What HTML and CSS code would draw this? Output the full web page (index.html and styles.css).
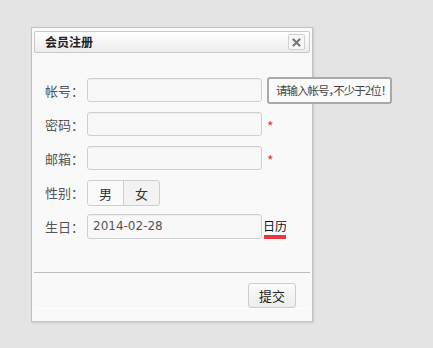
FILE: index.html
```html
<!DOCTYPE html>
<html>
<head>
<meta charset="utf-8">
<link rel="stylesheet" href="styles.css">
</head>
<body>
<div class="dialog">
  <div class="titlebar">
    <span class="title">会员注册</span>
    <span class="close">
      <svg width="9" height="9" viewBox="0 0 9 9"><path d="M1.5 1.5 L7.5 7.5 M7.5 1.5 L1.5 7.5" stroke="#777" stroke-width="2.2" stroke-linecap="round"/></svg>
    </span>
  </div>
  <div class="form">
    <div class="row">
      <span class="label">帐号：</span>
      <span class="input"></span>
      <span class="tip">请输入帐号，不少于2位！</span>
    </div>
    <div class="row">
      <span class="label">密码：</span>
      <span class="input"></span>
      <span class="star">*</span>
    </div>
    <div class="row">
      <span class="label">邮箱：</span>
      <span class="input"></span>
      <span class="star">*</span>
    </div>
    <div class="row">
      <span class="label">性别：</span>
      <span class="seg"><span class="opt on">男</span><span class="opt">女</span></span>
    </div>
    <div class="row">
      <span class="label">生日：</span>
      <span class="input val">2014-02-28</span>
      <span class="cal">日历</span>
    </div>
  </div>
  <div class="footer">
    <span class="btn">提交</span>
  </div>
</div>
</body>
</html>
```
FILE: styles.css
```css
html, body { margin: 0; padding: 0; }
body {
  background: #e4e4e4;
  width: 433px; height: 348px;
  font-family: "Noto Sans CJK SC", "DejaVu Sans", sans-serif;
  font-size: 13px;
  color: #444;
  padding-top: 27px;
  box-sizing: border-box;
  overflow: hidden;
}
.dialog {
  margin-left: 31px;
  width: 282px;
  height: 295px;
  box-sizing: border-box;
  background: #f9f9f9;
  border: 1px solid #c2c2c2;
  box-shadow: 1px 1px 2px rgba(0,0,0,0.12);
  padding: 3px 2px 0 2px;
  display: flex;
  flex-direction: column;
}
.titlebar {
  flex-shrink: 0;
  height: 22px;
  box-sizing: border-box;
  border: 1px solid #c9c9c9;
  border-radius: 2px;
  background: linear-gradient(#ffffff, #ececec);
  display: flex;
  align-items: center;
  justify-content: space-between;
  padding: 0 4px 0 10px;
}
.title { font-size: 12px; font-weight: bold; color: #222; line-height: 1; }
.close {
  width: 17px; height: 16px;
  box-sizing: border-box;
  border: 1px solid #d0d0d0;
  border-radius: 2px;
  background: #f7f7f7;
  display: flex; align-items: center; justify-content: center;
}
.form {
  flex-shrink: 0;
  padding: 25px 0 0 11px;
  display: flex;
  flex-direction: column;
  gap: 10px;
  height: 219px;
  box-sizing: border-box;
}
.row { display: flex; align-items: center; height: 24px; flex-shrink: 0; }
.row > * { flex-shrink: 0; }
.label { width: 42px; color: #555; line-height: 1; white-space: nowrap; }
.input {
  width: 175px; height: 24px;
  box-sizing: border-box;
  border: 1px solid #cfcfcf;
  border-radius: 3px;
  background: #f8f8f8;
  box-shadow: inset 0 1px 1px rgba(0,0,0,0.04);
}
.input.val {
  padding-left: 5px;
  display: flex; align-items: center;
  color: #555; font-family: "DejaVu Sans", sans-serif; font-size: 12px;
  height: 25px;
}
.star { color: #e03a3a; margin-left: 5px; font-size: 14px; margin-top: 4px; }
.tip {
  margin-left: 5px;
  height: 27px;
  box-sizing: border-box;
  border: 2px solid #a9a9a9;
  border-radius: 3px;
  background: #fbfbfb;
  padding: 0 5px 0 7px;
  display: flex; align-items: center;
  color: #444; white-space: nowrap;
  font-size: 11.5px;
  letter-spacing: -1px;
  font-feature-settings: "halt";
  position: relative;
  z-index: 1;
}
.seg {
  display: flex;
  height: 26px;
  box-sizing: border-box;
  border: 1px solid #cfcfcf;
  border-radius: 3px;
  background: #f2f2f2;
  margin-top: 2px;
}
.opt {
  width: 35px;
  display: flex; align-items: center; justify-content: center;
  color: #333;
}
.opt.on { background: #fafafa; border-right: 1px solid #cfcfcf; border-radius: 3px 0 0 3px; }
.cal {
  margin-left: 1px;
  color: #111;
  font-size: 12px;
  position: relative;
  line-height: 1;
}
.cal::after {
  content: "";
  position: absolute;
  left: 1px; right: 1px; bottom: -7px;
  height: 4px;
  background: #e8383d;
}
.footer {
  flex-shrink: 0;
  border-top: 1px solid #bdbdbd;
  box-shadow: 0 1px 0 #fff;
  display: flex;
  justify-content: flex-end;
  padding: 10px 14px 0 0;
}
.btn {
  width: 48px; height: 25px;
  box-sizing: border-box;
  border: 1px solid #cdcdcd;
  border-radius: 3px;
  background: linear-gradient(#fbfbfb, #ededed);
  display: flex; align-items: center; justify-content: center;
  color: #222;
}
```
